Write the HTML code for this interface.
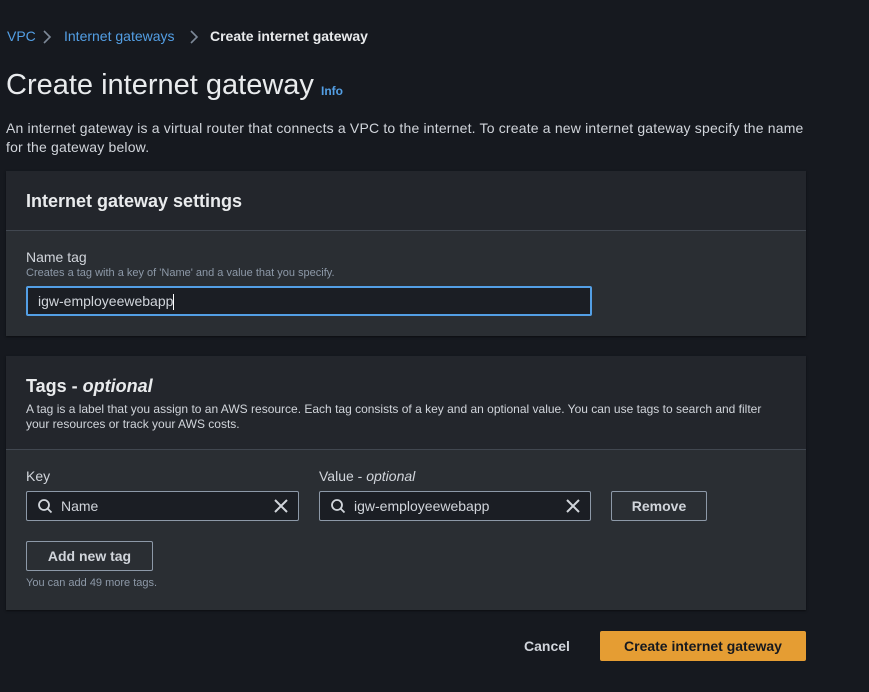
<!DOCTYPE html>
<html><head><meta charset="utf-8"><style>
*{margin:0;padding:0;box-sizing:border-box}
body{width:869px;height:692px;background:#16191f;font-family:"Liberation Sans",sans-serif;color:#d1d5db;position:relative;overflow:hidden}
.a{position:absolute;white-space:nowrap}
.card{position:absolute;left:6px;width:800px;background:#2a2e33;box-shadow:0 1px 2px rgba(0,0,0,.5)}
.hdr{background:#23262c;border-bottom:1px solid #414750}
.inp{position:absolute;background:#1b1e24;border:1px solid #8d99a8;border-radius:2px;height:30px;font-size:14px;color:#d1d5db;padding-left:34px;line-height:28px}
.btn{position:absolute;border:1px solid #8d99a8;border-radius:2px;font-weight:bold;font-size:14px;color:#d1d5db;text-align:center;height:30px;line-height:28px}
</style></head><body>
<div class="a" style="left:7px;top:28px;font-size:14px;color:#539fe5">VPC</div>
<svg class="a" style="left:42px;top:29px" width="10" height="16" viewBox="0 0 10 16" fill="none" stroke="#7d8998" stroke-width="1.6"><path d="M2 2L8 8L2 14"/></svg>
<div class="a" style="left:64px;top:28px;font-size:14px;color:#539fe5">Internet gateways</div>
<svg class="a" style="left:189px;top:29px" width="10" height="16" viewBox="0 0 10 16" fill="none" stroke="#7d8998" stroke-width="1.6"><path d="M2 2L8 8L2 14"/></svg>
<div class="a" style="left:210px;top:28px;font-size:14px;font-weight:bold;color:#e9ebed">Create internet gateway</div>
<div class="a" style="left:6px;top:69px;font-size:29px;color:#e9ebed">Create internet gateway</div>
<div class="a" style="left:321px;top:84px;font-size:12px;font-weight:bold;color:#539fe5">Info</div>
<div class="a" style="left:6px;top:119px;font-size:14px;line-height:19px;color:#d1d5db;letter-spacing:0.18px">An internet gateway is a virtual router that connects a VPC to the internet. To create a new internet gateway specify the name<br>for the gateway below.</div>

<div class="card" style="top:171px;height:165px">
<div class="hdr" style="height:60px"></div>
<div class="a" style="left:20px;top:20px;font-size:18px;font-weight:bold;color:#e9ebed">Internet gateway settings</div>
<div class="a" style="left:20px;top:78px;font-size:14px;color:#d1d5db">Name tag</div>
<div class="a" style="left:20px;top:96px;font-size:11px;color:#8d99a8">Creates a tag with a key of 'Name' and a value that you specify.</div>
<div class="inp" style="left:20px;top:115px;width:566px;border:2px solid #539fe5;padding-left:10px;line-height:26px">igw-employeewebapp<span style="display:inline-block;width:1px;height:16px;background:#fff;vertical-align:middle"></span></div>
</div>

<div class="card" style="top:356px;height:254px">
<div class="hdr" style="height:94px"></div>
<div class="a" style="left:20px;top:20px;font-size:18px;font-weight:bold;color:#e9ebed">Tags - <i>optional</i></div>
<div class="a" style="left:20px;top:46px;font-size:12px;line-height:15px;color:#d1d5db">A tag is a label that you assign to an AWS resource. Each tag consists of a key and an optional value. You can use tags to search and filter<br>your resources or track your AWS costs.</div>
<div class="a" style="left:20px;top:112px;font-size:14px">Key</div>
<div class="a" style="left:313px;top:112px;font-size:14px">Value - <i>optional</i></div>
<div class="inp" style="left:20px;top:135px;width:273px">Name</div>
<div class="inp" style="left:313px;top:135px;width:272px">igw-employeewebapp</div>
<svg class="a" style="left:31px;top:142px" width="16" height="16" viewBox="0 0 16 16" fill="none" stroke="#d1d5db" stroke-width="1.8"><circle cx="7" cy="7" r="5"/><path d="M10.5 10.5L14.5 14.5"/></svg>
<svg class="a" style="left:324px;top:142px" width="16" height="16" viewBox="0 0 16 16" fill="none" stroke="#d1d5db" stroke-width="1.8"><circle cx="7" cy="7" r="5"/><path d="M10.5 10.5L14.5 14.5"/></svg>
<svg class="a" style="left:268px;top:143px" width="14" height="14" viewBox="0 0 14 14" stroke="#d1d5db" stroke-width="2"><path d="M1 1L13 13M13 1L1 13"/></svg>
<svg class="a" style="left:560px;top:143px" width="14" height="14" viewBox="0 0 14 14" stroke="#d1d5db" stroke-width="2"><path d="M1 1L13 13M13 1L1 13"/></svg>
<div class="btn" style="left:605px;top:135px;width:96px">Remove</div>
<div class="btn" style="left:20px;top:185px;width:127px">Add new tag</div>
<div class="a" style="left:20px;top:221px;font-size:11px;color:#8d99a8">You can add 49 more tags.</div>
</div>

<div class="a" style="left:524px;top:638px;font-size:14px;font-weight:bold;color:#d1d5db">Cancel</div>
<div class="a" style="left:600px;top:631px;width:206px;height:30px;background:#e59d33;border-radius:2px;font-size:14px;font-weight:bold;color:#16191f;text-align:center;line-height:30px">Create internet gateway</div>
</body></html>
